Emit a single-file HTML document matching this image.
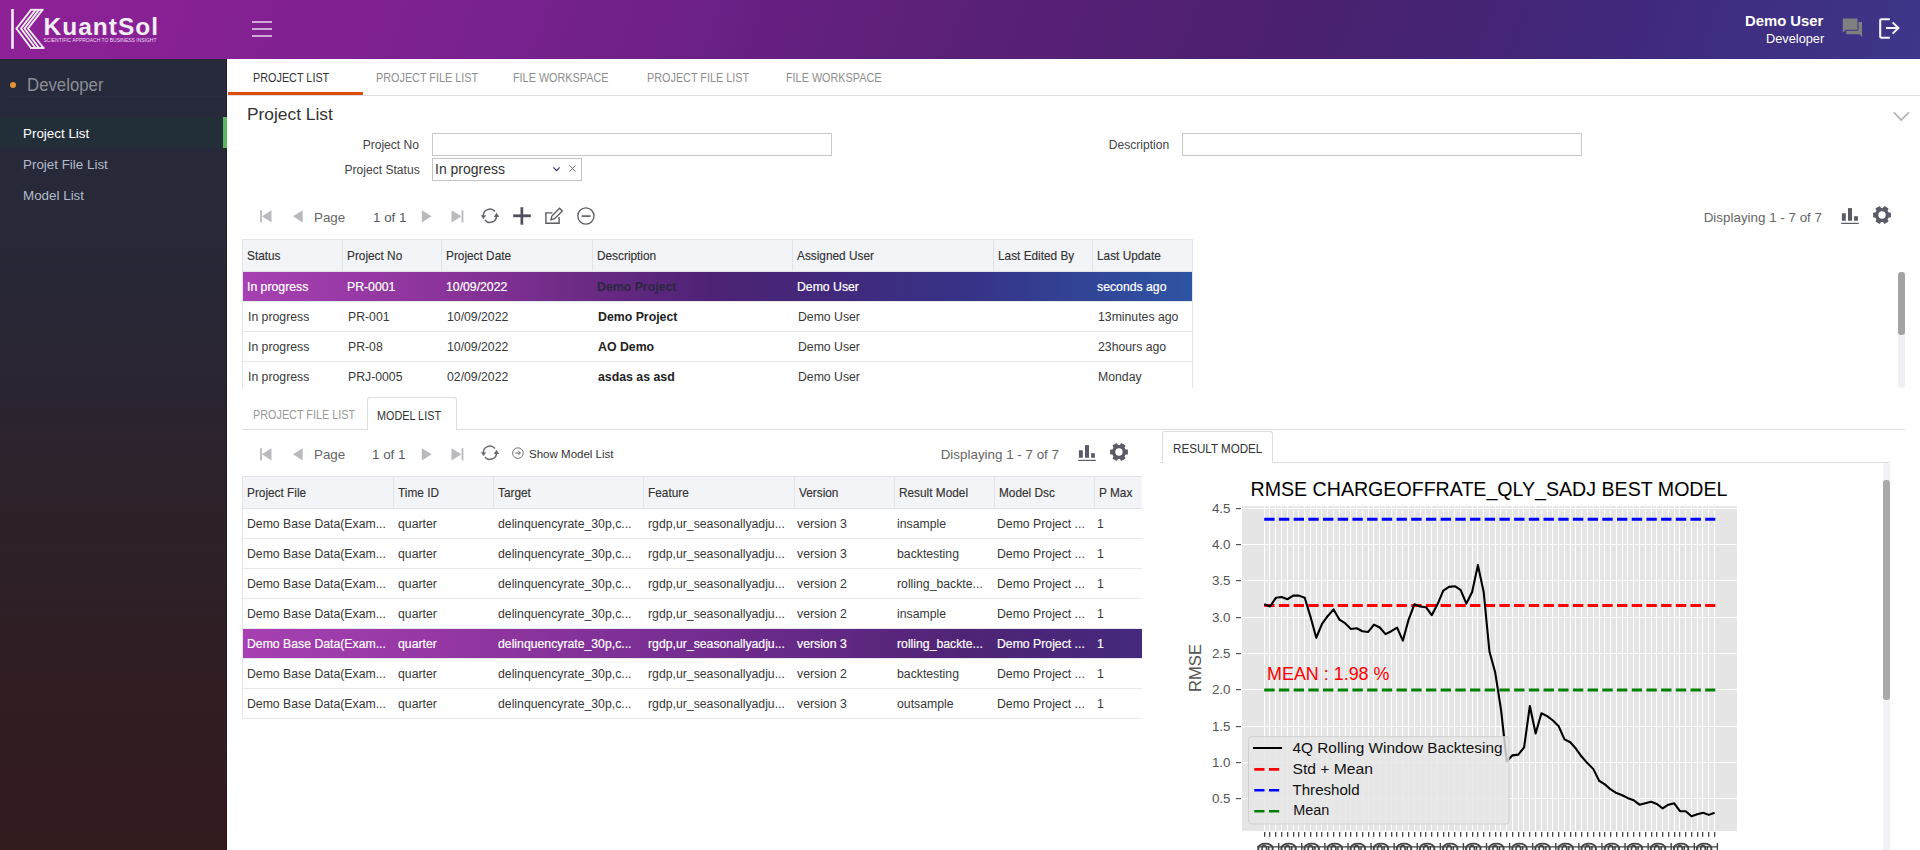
<!DOCTYPE html>
<html><head><meta charset="utf-8"><title>KuantSol</title>
<style>
html,body{margin:0;padding:0;width:1920px;height:850px;overflow:hidden;background:#fff;font-family:"Liberation Sans", sans-serif;}
.t{position:absolute;white-space:nowrap;font-family:"Liberation Sans", sans-serif;}
.b{position:absolute;display:block;}
</style></head><body>
<div class="b" style="left:0px;top:0px;width:1920px;height:59px;background:linear-gradient(110deg,#8f2197 0%,#7a2190 25%,#5a2078 50%,#4a2070 68%,#40297c 85%,#3d3789 100%);"></div><svg class="b" style="left:0px;top:0px;" width="170" height="59" viewBox="0 0 170 59">
<rect x="11.2" y="9" width="2.6" height="39.8" fill="#f2eef4"/>
<g fill="none" stroke="#f2eef4" stroke-width="1.9" stroke-linejoin="miter">
<polyline points="31,9.8 16.5,28.5 31,48"/>
<polyline points="35.5,9.8 21,28.5 35.5,48"/>
<polyline points="39,9.8 24.5,28.5 39,48"/>
<polyline points="42.5,9.8 28,28.5 43.5,48"/>
<line x1="30" y1="9.8" x2="43.5" y2="9.8"/>
<line x1="30" y1="48" x2="44.5" y2="48"/>
</g>
<text x="43.5" y="42.0" font-family="Liberation Sans" font-size="4.8" fill="#eadcef" textLength="113" lengthAdjust="spacingAndGlyphs">SCIENTIFIC APPROACH TO BUSINESS INSIGHT</text>
</svg><div class="t" style="top:14.66px;font-size:24.5px;line-height:24.5px;color:#f2eef4;font-weight:bold;letter-spacing:1.0px;left:43.5px;">KuantSol</div><div class="b" style="left:252px;top:21px;width:20px;height:2px;background:rgba(255,255,255,0.62);"></div><div class="b" style="left:252px;top:28px;width:20px;height:2px;background:rgba(255,255,255,0.62);"></div><div class="b" style="left:252px;top:35px;width:20px;height:2px;background:rgba(255,255,255,0.62);"></div><div class="t" style="top:13.79px;font-size:14.66px;line-height:14.66px;color:#ffffff;font-weight:bold;right:96.20000000000005px;text-align:right;transform:scaleX(1.013);transform-origin:right center;">Demo User</div><div class="t" style="top:32.20px;font-size:12.99px;line-height:12.99px;color:#ffffff;right:96.20000000000005px;text-align:right;transform:scaleX(0.983);transform-origin:right center;">Developer</div><svg class="b" style="left:1840px;top:16px;" width="26" height="24" viewBox="0 0 26 24">
<path d="M6.2 6 H22 V21 L19.5 18.2 H6.2 Z" fill="#808080"/>
<path d="M2.6 2 H17.4 Q18 2 18 2.6 V13.6 Q18 14.2 17.4 14.2 H6.2 L2.2 17.8 V2.6 Q2.2 2 2.6 2 Z" fill="#808080" stroke="#3f3586" stroke-width="1.1"/>
</svg><svg class="b" style="left:1876px;top:16px;" width="26" height="25" viewBox="0 0 26 25">
<path d="M13.8 3.2 H5.4 Q4.2 3.2 4.2 4.4 V20.6 Q4.2 21.8 5.4 21.8 H13.8" fill="none" stroke="#f4f4f8" stroke-width="2.1"/>
<path d="M10 12 H22.4 M16.6 6.4 L22.4 12 L16.6 17.6" fill="none" stroke="#f4f4f8" stroke-width="2"/>
</svg><div class="b" style="left:0px;top:59px;width:227px;height:791px;background:linear-gradient(180deg,#262a3b 0%,#292736 32%,#2d2129 58%,#301e23 80%,#331b1e 100%);"></div><div class="b" style="left:226px;top:59px;width:1px;height:791px;background:rgba(0,0,0,0.22);"></div><div class="b" style="left:12.9px;top:82px;width:6px;height:6px;border-radius:50%;background:#e49038;transform:translateX(-3px)"></div><div class="t" style="top:76.27px;font-size:18.58px;line-height:18.58px;color:#8c8d97;left:27.2px;transform:scaleX(0.904);transform-origin:left center;">Developer</div><div class="b" style="left:5px;top:96px;width:217px;height:1px;background:repeating-linear-gradient(90deg,rgba(255,255,255,0.06) 0 1px,transparent 1px 4px);"></div><div class="b" style="left:0px;top:117px;width:223px;height:31px;background:#222f38;"></div><div class="b" style="left:223px;top:117px;width:4px;height:31px;background:#5cb85c;"></div><div class="t" style="top:127.20px;font-size:12.99px;line-height:12.99px;color:#ffffff;left:22.7px;transform:scaleX(1.031);transform-origin:left center;">Project List</div><div class="t" style="top:158.00px;font-size:12.99px;line-height:12.99px;color:#b4bbc9;left:22.7px;transform:scaleX(1.031);transform-origin:left center;">Projet File List</div><div class="t" style="top:189.30px;font-size:12.99px;line-height:12.99px;color:#b4bbc9;left:22.7px;transform:scaleX(1.031);transform-origin:left center;">Model List</div><div class="b" style="left:227px;top:59px;width:1693px;height:791px;background:#ffffff;"></div><div class="t" style="top:72.23px;font-size:12.6px;line-height:12.6px;color:#333333;left:252.79999999999998px;transform:scaleX(0.86);transform-origin:left center;">PROJECT LIST</div><div class="t" style="top:72.23px;font-size:12.6px;line-height:12.6px;color:#8e8e8e;left:375.59999999999997px;transform:scaleX(0.86);transform-origin:left center;">PROJECT FILE LIST</div><div class="t" style="top:72.23px;font-size:12.6px;line-height:12.6px;color:#8e8e8e;left:513.2px;transform:scaleX(0.86);transform-origin:left center;">FILE WORKSPACE</div><div class="t" style="top:72.23px;font-size:12.6px;line-height:12.6px;color:#8e8e8e;left:647.2px;transform:scaleX(0.86);transform-origin:left center;">PROJECT FILE LIST</div><div class="t" style="top:72.23px;font-size:12.6px;line-height:12.6px;color:#8e8e8e;left:785.6px;transform:scaleX(0.86);transform-origin:left center;">FILE WORKSPACE</div><div class="b" style="left:227px;top:95px;width:1693px;height:1px;background:#dddddd;"></div><div class="b" style="left:228px;top:92px;width:135px;height:3px;background:#e04b0c;"></div><div class="t" style="top:106.81px;font-size:16.76px;line-height:16.76px;color:#333333;left:246.7px;transform:scaleX(1.035);transform-origin:left center;">Project List</div><svg class="b" style="left:1890px;top:108px;" width="24" height="16" viewBox="0 0 24 16"><polyline points="3.8,4.4 11.2,12 18.8,4.4" fill="none" stroke="#b0b0b0" stroke-width="1.6"/></svg><div class="t" style="top:139.29px;font-size:12.65px;line-height:12.65px;color:#444444;right:1500.5px;text-align:right;transform:scaleX(0.955);transform-origin:right center;">Project No</div><div class="b" style="left:432px;top:133px;width:400px;height:23px;background:#fff;border:1px solid #c8c8c8;box-sizing:border-box"></div><div class="t" style="top:139.29px;font-size:12.65px;line-height:12.65px;color:#444444;right:750.5px;text-align:right;transform:scaleX(0.955);transform-origin:right center;">Description</div><div class="b" style="left:1182px;top:133px;width:400px;height:23px;background:#fff;border:1px solid #c8c8c8;box-sizing:border-box"></div><div class="t" style="top:164.29px;font-size:12.65px;line-height:12.65px;color:#444444;right:1500.5px;text-align:right;transform:scaleX(0.955);transform-origin:right center;">Project Status</div><div class="b" style="left:432px;top:158px;width:150px;height:23px;background:#fff;border:1px solid #c4c4c4;box-sizing:border-box"></div><div class="t" style="top:163.37px;font-size:13.97px;line-height:13.97px;color:#333333;left:435px;">In progress</div><svg class="b" style="left:550px;top:162px;" width="34" height="14" viewBox="0 0 34 14"><polyline points="3.4,5.3 6.5,8.6 9.6,5.3" fill="none" stroke="#2d2a6e" stroke-width="1.1"/>
<path d="M19.4 3.3 L25.6 9.6 M25.6 3.3 L19.4 9.6" stroke="#707070" stroke-width="1"/></svg><svg class="b" style="left:255px;top:206.3px;" width="215" height="20" viewBox="0 0 215 20">
<rect x="5.1" y="4.2" width="1.8" height="12.2" fill="#b9b9be"/>
<polygon points="7,10.3 16.5,4.2 16.5,16.4" fill="#b9b9be"/>
<polygon points="38,10.3 47.7,4.2 47.7,16.4" fill="#b9b9be"/>
<polygon points="176.6,10.3 166.8,4.2 166.8,16.4" fill="#b9b9be"/>
<polygon points="206.5,10.3 196.5,4.2 196.5,16.4" fill="#b9b9be"/>
<rect x="206.6" y="4.2" width="1.8" height="12.2" fill="#b9b9be"/>
</svg><div class="t" style="top:211.09px;font-size:13.13px;line-height:13.13px;color:#666666;left:314px;transform:scaleX(1.02);transform-origin:left center;">Page</div><div class="t" style="top:211.09px;font-size:13.13px;line-height:13.13px;color:#555a66;left:372.6px;transform:scaleX(1.02);transform-origin:left center;">1 of 1</div><svg class="b" style="left:480px;top:206px;" width="20" height="20" viewBox="0 0 20 20"><path d="M14.96 5.56 A6.6 6.6 0 0 0 3.3 9.8" fill="none" stroke="#606068" stroke-width="1.5"/>
<polygon points="0.9,9.2 6.1,9.2 3.5,13.2" fill="#606068"/>
<path d="M4.84 14.04 A6.6 6.6 0 0 0 16.5 10.2" fill="none" stroke="#606068" stroke-width="1.5"/>
<polygon points="13.8,10.9 19.2,10.9 16.5,6.8" fill="#606068"/></svg><svg class="b" style="left:510px;top:205px;" width="24" height="22" viewBox="0 0 24 22"><rect x="10.5" y="2.2" width="2.7" height="17.5" fill="#4f505c"/><rect x="3.2" y="9.4" width="17.6" height="2.8" fill="#4f505c"/></svg><svg class="b" style="left:543px;top:206px;" width="22" height="20" viewBox="0 0 22 20"><path d="M9.5 6.9 H2.9 V17.2 H16.1 V10.9" fill="none" stroke="#5a5a62" stroke-width="1.4"/>
<path d="M16.6 2.3 L19.3 5.0 L11.6 12.7 L7.9 13.8 L8.9 10.0 Z" fill="none" stroke="#5a5a62" stroke-width="1.35" stroke-linejoin="miter"/></svg><svg class="b" style="left:575px;top:205px;" width="22" height="22" viewBox="0 0 22 22"><circle cx="10.9" cy="11" r="8.1" fill="none" stroke="#5a5a62" stroke-width="1.35"/><rect x="6.6" y="10.3" width="8.9" height="1.6" fill="#5a5a62"/></svg><div class="t" style="top:211.09px;font-size:13.13px;line-height:13.13px;color:#666666;right:98px;text-align:right;transform:scaleX(1.02);transform-origin:right center;">Displaying 1 - 7 of 7</div><svg class="b" style="left:1840px;top:208px;" width="20" height="17" viewBox="0 0 20 17"><rect x="1.9" y="5.25" width="3.9" height="7.5" fill="#5a5b66"/><rect x="8" y="0.1" width="4" height="12.65" fill="#5a5b66"/>
<rect x="14.1" y="8.2" width="3.8" height="4.55" fill="#5a5b66"/><rect x="1.2" y="14.8" width="17.6" height="1.2" fill="#5a5b66"/></svg><svg class="b" style="left:1872px;top:205.4px;" width="20" height="20" viewBox="0 0 20 20"><g transform="translate(10,10)"><circle r="7" fill="#5a5b66"/><rect x="-2.6" y="-8.9" width="5.2" height="4.5" rx="0.6" fill="#5a5b66" transform="rotate(30)"/><rect x="-2.6" y="-8.9" width="5.2" height="4.5" rx="0.6" fill="#5a5b66" transform="rotate(90)"/><rect x="-2.6" y="-8.9" width="5.2" height="4.5" rx="0.6" fill="#5a5b66" transform="rotate(150)"/><rect x="-2.6" y="-8.9" width="5.2" height="4.5" rx="0.6" fill="#5a5b66" transform="rotate(210)"/><rect x="-2.6" y="-8.9" width="5.2" height="4.5" rx="0.6" fill="#5a5b66" transform="rotate(270)"/><rect x="-2.6" y="-8.9" width="5.2" height="4.5" rx="0.6" fill="#5a5b66" transform="rotate(330)"/><circle r="3.7" fill="#fff"/></g></svg><div class="b" style="left:242px;top:239px;width:951px;height:1px;background:#e4e4e8;"></div><div class="b" style="left:242px;top:239px;width:1px;height:149px;background:#e4e4e8;"></div><div class="b" style="left:1192px;top:239px;width:1px;height:149px;background:#e4e4e8;"></div><div class="b" style="left:243px;top:240px;width:949px;height:31px;background:#f3f4f7;"></div><div class="b" style="left:242px;top:271px;width:951px;height:1px;background:#e1e2e6;"></div><div class="b" style="left:342px;top:240px;width:1px;height:31px;background:#e3e4e8;"></div><div class="b" style="left:441px;top:240px;width:1px;height:31px;background:#e3e4e8;"></div><div class="b" style="left:592px;top:240px;width:1px;height:31px;background:#e3e4e8;"></div><div class="b" style="left:792px;top:240px;width:1px;height:31px;background:#e3e4e8;"></div><div class="b" style="left:993px;top:240px;width:1px;height:31px;background:#e3e4e8;"></div><div class="b" style="left:1092px;top:240px;width:1px;height:31px;background:#e3e4e8;"></div><div class="t" style="top:249.90px;font-size:12.29px;line-height:12.29px;color:#333333;left:246.5px;transform:scaleX(0.963);transform-origin:left center;-webkit-text-stroke:0.15px #333;">Status</div><div class="t" style="top:249.90px;font-size:12.29px;line-height:12.29px;color:#333333;left:346.5px;transform:scaleX(0.963);transform-origin:left center;-webkit-text-stroke:0.15px #333;">Project No</div><div class="t" style="top:249.90px;font-size:12.29px;line-height:12.29px;color:#333333;left:445.5px;transform:scaleX(0.963);transform-origin:left center;-webkit-text-stroke:0.15px #333;">Project Date</div><div class="t" style="top:249.90px;font-size:12.29px;line-height:12.29px;color:#333333;left:596.5px;transform:scaleX(0.963);transform-origin:left center;-webkit-text-stroke:0.15px #333;">Description</div><div class="t" style="top:249.90px;font-size:12.29px;line-height:12.29px;color:#333333;left:796.5px;transform:scaleX(0.963);transform-origin:left center;-webkit-text-stroke:0.15px #333;">Assigned User</div><div class="t" style="top:249.90px;font-size:12.29px;line-height:12.29px;color:#333333;left:997.5px;transform:scaleX(0.963);transform-origin:left center;-webkit-text-stroke:0.15px #333;">Last Edited By</div><div class="t" style="top:249.90px;font-size:12.29px;line-height:12.29px;color:#333333;left:1096.5px;transform:scaleX(0.963);transform-origin:left center;-webkit-text-stroke:0.15px #333;">Last Update</div><div class="b" style="left:243px;top:272px;width:949px;height:29px;background:linear-gradient(90deg,#a740b2 0%,#8a3399 22%,#4c2274 50%,#373185 75%,#2d54a4 100%);"></div><div class="b" style="left:243px;top:301px;width:949px;height:1px;background:#e6e7ec;"></div><div class="b" style="left:243px;top:331px;width:949px;height:1px;background:#e6e7ec;"></div><div class="b" style="left:243px;top:361px;width:949px;height:1px;background:#e6e7ec;"></div><div class="t" style="top:280.62px;font-size:12.5px;line-height:12.5px;color:#ffffff;left:247.2px;transform:scaleX(0.98);transform-origin:left center;-webkit-text-stroke:0.2px #fff;">In progress</div><div class="t" style="top:280.62px;font-size:12.5px;line-height:12.5px;color:#ffffff;left:347.2px;transform:scaleX(0.98);transform-origin:left center;-webkit-text-stroke:0.2px #fff;">PR-0001</div><div class="t" style="top:280.62px;font-size:12.5px;line-height:12.5px;color:#ffffff;left:446.2px;transform:scaleX(0.98);transform-origin:left center;-webkit-text-stroke:0.2px #fff;">10/09/2022</div><div class="t" style="top:280.62px;font-size:12.5px;line-height:12.5px;color:#2b2840;font-weight:bold;left:597.2px;transform:scaleX(0.985);transform-origin:left center;">Demo Project</div><div class="t" style="top:280.62px;font-size:12.5px;line-height:12.5px;color:#ffffff;left:797.2px;transform:scaleX(0.98);transform-origin:left center;-webkit-text-stroke:0.2px #fff;">Demo User</div><div class="t" style="top:280.62px;font-size:12.5px;line-height:12.5px;color:#ffffff;left:1097.2px;transform:scaleX(0.98);transform-origin:left center;-webkit-text-stroke:0.2px #fff;">seconds ago</div><div class="t" style="top:310.62px;font-size:12.5px;line-height:12.5px;color:#383838;left:247.8px;transform:scaleX(0.98);transform-origin:left center;">In progress</div><div class="t" style="top:310.62px;font-size:12.5px;line-height:12.5px;color:#383838;left:347.8px;transform:scaleX(0.98);transform-origin:left center;">PR-001</div><div class="t" style="top:310.62px;font-size:12.5px;line-height:12.5px;color:#383838;left:446.8px;transform:scaleX(0.98);transform-origin:left center;">10/09/2022</div><div class="t" style="top:310.62px;font-size:12.5px;line-height:12.5px;color:#222222;font-weight:bold;left:597.8px;transform:scaleX(0.985);transform-origin:left center;">Demo Project</div><div class="t" style="top:310.62px;font-size:12.5px;line-height:12.5px;color:#383838;left:797.8px;transform:scaleX(0.98);transform-origin:left center;">Demo User</div><div class="t" style="top:310.62px;font-size:12.5px;line-height:12.5px;color:#383838;left:1097.8px;transform:scaleX(0.98);transform-origin:left center;">13minutes ago</div><div class="t" style="top:340.62px;font-size:12.5px;line-height:12.5px;color:#383838;left:247.8px;transform:scaleX(0.98);transform-origin:left center;">In progress</div><div class="t" style="top:340.62px;font-size:12.5px;line-height:12.5px;color:#383838;left:347.8px;transform:scaleX(0.98);transform-origin:left center;">PR-08</div><div class="t" style="top:340.62px;font-size:12.5px;line-height:12.5px;color:#383838;left:446.8px;transform:scaleX(0.98);transform-origin:left center;">10/09/2022</div><div class="t" style="top:340.62px;font-size:12.5px;line-height:12.5px;color:#222222;font-weight:bold;left:597.8px;transform:scaleX(0.985);transform-origin:left center;">AO Demo</div><div class="t" style="top:340.62px;font-size:12.5px;line-height:12.5px;color:#383838;left:797.8px;transform:scaleX(0.98);transform-origin:left center;">Demo User</div><div class="t" style="top:340.62px;font-size:12.5px;line-height:12.5px;color:#383838;left:1097.8px;transform:scaleX(0.98);transform-origin:left center;">23hours ago</div><div class="t" style="top:370.62px;font-size:12.5px;line-height:12.5px;color:#383838;left:247.8px;transform:scaleX(0.98);transform-origin:left center;">In progress</div><div class="t" style="top:370.62px;font-size:12.5px;line-height:12.5px;color:#383838;left:347.8px;transform:scaleX(0.98);transform-origin:left center;">PRJ-0005</div><div class="t" style="top:370.62px;font-size:12.5px;line-height:12.5px;color:#383838;left:446.8px;transform:scaleX(0.98);transform-origin:left center;">02/09/2022</div><div class="t" style="top:370.62px;font-size:12.5px;line-height:12.5px;color:#222222;font-weight:bold;left:597.8px;transform:scaleX(0.985);transform-origin:left center;">asdas as asd</div><div class="t" style="top:370.62px;font-size:12.5px;line-height:12.5px;color:#383838;left:797.8px;transform:scaleX(0.98);transform-origin:left center;">Demo User</div><div class="t" style="top:370.62px;font-size:12.5px;line-height:12.5px;color:#383838;left:1097.8px;transform:scaleX(0.98);transform-origin:left center;">Monday</div><div class="b" style="left:1898px;top:272px;width:7px;height:116px;background:#f0f0f4;border-radius:3px"></div><div class="b" style="left:1898px;top:272px;width:7px;height:63px;background:#a2a3a2;border-radius:3px"></div><div class="b" style="left:242px;top:429px;width:1663px;height:1px;background:#dddddd;"></div><div class="t" style="top:408.53px;font-size:12.6px;line-height:12.6px;color:#999999;left:252.5px;transform:scaleX(0.86);transform-origin:left center;">PROJECT FILE LIST</div><div class="b" style="left:366.5px;top:397px;width:90px;height:33px;background:#fff;border:1px solid #dddddd;border-bottom:none;border-radius:3px 3px 0 0;box-sizing:border-box"></div><div class="t" style="top:409.53px;font-size:12.6px;line-height:12.6px;color:#333333;left:376.9px;transform:scaleX(0.86);transform-origin:left center;">MODEL LIST</div><svg class="b" style="left:255px;top:444.2px;" width="215" height="20" viewBox="0 0 215 20">
<rect x="5.1" y="4.2" width="1.8" height="12.2" fill="#b9b9be"/>
<polygon points="7,10.3 16.5,4.2 16.5,16.4" fill="#b9b9be"/>
<polygon points="38,10.3 47.7,4.2 47.7,16.4" fill="#b9b9be"/>
<polygon points="176.6,10.3 166.8,4.2 166.8,16.4" fill="#b9b9be"/>
<polygon points="206.5,10.3 196.5,4.2 196.5,16.4" fill="#b9b9be"/>
<rect x="206.6" y="4.2" width="1.8" height="12.2" fill="#b9b9be"/>
</svg><div class="t" style="top:448.09px;font-size:13.13px;line-height:13.13px;color:#666666;left:314px;transform:scaleX(1.02);transform-origin:left center;">Page</div><div class="t" style="top:448.09px;font-size:13.13px;line-height:13.13px;color:#555a66;left:372px;transform:scaleX(1.02);transform-origin:left center;">1 of 1</div><svg class="b" style="left:480px;top:443px;" width="20" height="20" viewBox="0 0 20 20"><path d="M14.96 5.56 A6.6 6.6 0 0 0 3.3 9.8" fill="none" stroke="#6a6a70" stroke-width="1.5"/>
<polygon points="0.9,9.2 6.1,9.2 3.5,13.2" fill="#6a6a70"/>
<path d="M4.84 14.04 A6.6 6.6 0 0 0 16.5 10.2" fill="none" stroke="#6a6a70" stroke-width="1.5"/>
<polygon points="13.8,10.9 19.2,10.9 16.5,6.8" fill="#6a6a70"/></svg><svg class="b" style="left:510px;top:446px;" width="16" height="15" viewBox="0 0 16 15"><circle cx="7.9" cy="7.1" r="5.3" fill="none" stroke="#666" stroke-width="0.9"/><path d="M5.2 7.1 H10.3 M8.4 5.2 L10.4 7.1 L8.4 9" fill="none" stroke="#555" stroke-width="0.9"/></svg><div class="t" style="top:448.60px;font-size:10.75px;line-height:10.75px;color:#333333;left:528.5px;transform:scaleX(1.072);transform-origin:left center;">Show Model List</div><div class="t" style="top:447.69px;font-size:13.13px;line-height:13.13px;color:#666666;right:860.8px;text-align:right;transform:scaleX(1.02);transform-origin:right center;">Displaying 1 - 7 of 7</div><svg class="b" style="left:1077px;top:445px;" width="20" height="17" viewBox="0 0 20 17"><rect x="1.9" y="5.25" width="3.9" height="7.5" fill="#5a5b66"/><rect x="8" y="0.1" width="4" height="12.65" fill="#5a5b66"/>
<rect x="14.1" y="8.2" width="3.8" height="4.55" fill="#5a5b66"/><rect x="1.2" y="14.8" width="17.6" height="1.2" fill="#5a5b66"/></svg><svg class="b" style="left:1109px;top:442.3px;" width="20" height="20" viewBox="0 0 20 20"><g transform="translate(10,10)"><circle r="7" fill="#5a5b66"/><rect x="-2.6" y="-8.9" width="5.2" height="4.5" rx="0.6" fill="#5a5b66" transform="rotate(30)"/><rect x="-2.6" y="-8.9" width="5.2" height="4.5" rx="0.6" fill="#5a5b66" transform="rotate(90)"/><rect x="-2.6" y="-8.9" width="5.2" height="4.5" rx="0.6" fill="#5a5b66" transform="rotate(150)"/><rect x="-2.6" y="-8.9" width="5.2" height="4.5" rx="0.6" fill="#5a5b66" transform="rotate(210)"/><rect x="-2.6" y="-8.9" width="5.2" height="4.5" rx="0.6" fill="#5a5b66" transform="rotate(270)"/><rect x="-2.6" y="-8.9" width="5.2" height="4.5" rx="0.6" fill="#5a5b66" transform="rotate(330)"/><circle r="3.7" fill="#fff"/></g></svg><div class="b" style="left:242px;top:476px;width:900px;height:1px;background:#e4e4e8;"></div><div class="b" style="left:242px;top:476px;width:1px;height:243px;background:#e4e4e8;"></div><div class="b" style="left:243px;top:477px;width:899px;height:31px;background:#f3f4f7;"></div><div class="b" style="left:242px;top:508px;width:900px;height:1px;background:#e1e2e6;"></div><div class="b" style="left:393px;top:477px;width:1px;height:31px;background:#e3e4e8;"></div><div class="b" style="left:493px;top:477px;width:1px;height:31px;background:#e3e4e8;"></div><div class="b" style="left:643px;top:477px;width:1px;height:31px;background:#e3e4e8;"></div><div class="b" style="left:794px;top:477px;width:1px;height:31px;background:#e3e4e8;"></div><div class="b" style="left:894px;top:477px;width:1px;height:31px;background:#e3e4e8;"></div><div class="b" style="left:994px;top:477px;width:1px;height:31px;background:#e3e4e8;"></div><div class="b" style="left:1094px;top:477px;width:1px;height:31px;background:#e3e4e8;"></div><div class="t" style="top:487.20px;font-size:12.29px;line-height:12.29px;color:#333333;left:246.5px;transform:scaleX(0.963);transform-origin:left center;-webkit-text-stroke:0.15px #333;">Project File</div><div class="t" style="top:487.20px;font-size:12.29px;line-height:12.29px;color:#333333;left:397.5px;transform:scaleX(0.963);transform-origin:left center;-webkit-text-stroke:0.15px #333;">Time ID</div><div class="t" style="top:487.20px;font-size:12.29px;line-height:12.29px;color:#333333;left:497.5px;transform:scaleX(0.963);transform-origin:left center;-webkit-text-stroke:0.15px #333;">Target</div><div class="t" style="top:487.20px;font-size:12.29px;line-height:12.29px;color:#333333;left:647.5px;transform:scaleX(0.963);transform-origin:left center;-webkit-text-stroke:0.15px #333;">Feature</div><div class="t" style="top:487.20px;font-size:12.29px;line-height:12.29px;color:#333333;left:798.5px;transform:scaleX(0.963);transform-origin:left center;-webkit-text-stroke:0.15px #333;">Version</div><div class="t" style="top:487.20px;font-size:12.29px;line-height:12.29px;color:#333333;left:898.5px;transform:scaleX(0.963);transform-origin:left center;-webkit-text-stroke:0.15px #333;">Result Model</div><div class="t" style="top:487.20px;font-size:12.29px;line-height:12.29px;color:#333333;left:998.5px;transform:scaleX(0.963);transform-origin:left center;-webkit-text-stroke:0.15px #333;">Model Dsc</div><div class="t" style="top:487.20px;font-size:12.29px;line-height:12.29px;color:#333333;left:1098.5px;transform:scaleX(0.963);transform-origin:left center;-webkit-text-stroke:0.15px #333;">P Max</div><div class="b" style="left:243px;top:538px;width:899px;height:1px;background:#e6e7ec;"></div><div class="b" style="left:243px;top:568px;width:899px;height:1px;background:#e6e7ec;"></div><div class="b" style="left:243px;top:598px;width:899px;height:1px;background:#e6e7ec;"></div><div class="b" style="left:243px;top:628px;width:899px;height:1px;background:#e6e7ec;"></div><div class="b" style="left:243px;top:658px;width:899px;height:1px;background:#e6e7ec;"></div><div class="b" style="left:243px;top:688px;width:899px;height:1px;background:#e6e7ec;"></div><div class="b" style="left:243px;top:718px;width:899px;height:1px;background:#e6e7ec;"></div><div class="b" style="left:243px;top:629px;width:899px;height:29px;background:linear-gradient(90deg,#a740b2 0%,#8d349e 30%,#6a2a8a 58%,#4f2476 80%,#44297c 100%);"></div><div class="t" style="top:518.02px;font-size:12.5px;line-height:12.5px;color:#363636;left:247.2px;transform:scaleX(0.98);transform-origin:left center;">Demo Base Data(Exam...</div><div class="t" style="top:518.02px;font-size:12.5px;line-height:12.5px;color:#363636;left:398.2px;transform:scaleX(0.98);transform-origin:left center;">quarter</div><div class="t" style="top:518.02px;font-size:12.5px;line-height:12.5px;color:#363636;left:498.2px;transform:scaleX(0.98);transform-origin:left center;">delinquencyrate_30p,c...</div><div class="t" style="top:518.02px;font-size:12.5px;line-height:12.5px;color:#363636;left:648.2px;transform:scaleX(0.98);transform-origin:left center;">rgdp,ur_seasonallyadju...</div><div class="t" style="top:518.02px;font-size:12.5px;line-height:12.5px;color:#363636;left:797.2px;transform:scaleX(0.98);transform-origin:left center;">version 3</div><div class="t" style="top:518.02px;font-size:12.5px;line-height:12.5px;color:#363636;left:897.2px;transform:scaleX(0.98);transform-origin:left center;">insample</div><div class="t" style="top:518.02px;font-size:12.5px;line-height:12.5px;color:#363636;left:997.2px;transform:scaleX(0.98);transform-origin:left center;">Demo Project ...</div><div class="t" style="top:518.02px;font-size:12.5px;line-height:12.5px;color:#363636;left:1097.2px;transform:scaleX(0.98);transform-origin:left center;">1</div><div class="t" style="top:548.02px;font-size:12.5px;line-height:12.5px;color:#363636;left:247.2px;transform:scaleX(0.98);transform-origin:left center;">Demo Base Data(Exam...</div><div class="t" style="top:548.02px;font-size:12.5px;line-height:12.5px;color:#363636;left:398.2px;transform:scaleX(0.98);transform-origin:left center;">quarter</div><div class="t" style="top:548.02px;font-size:12.5px;line-height:12.5px;color:#363636;left:498.2px;transform:scaleX(0.98);transform-origin:left center;">delinquencyrate_30p,c...</div><div class="t" style="top:548.02px;font-size:12.5px;line-height:12.5px;color:#363636;left:648.2px;transform:scaleX(0.98);transform-origin:left center;">rgdp,ur_seasonallyadju...</div><div class="t" style="top:548.02px;font-size:12.5px;line-height:12.5px;color:#363636;left:797.2px;transform:scaleX(0.98);transform-origin:left center;">version 3</div><div class="t" style="top:548.02px;font-size:12.5px;line-height:12.5px;color:#363636;left:897.2px;transform:scaleX(0.98);transform-origin:left center;">backtesting</div><div class="t" style="top:548.02px;font-size:12.5px;line-height:12.5px;color:#363636;left:997.2px;transform:scaleX(0.98);transform-origin:left center;">Demo Project ...</div><div class="t" style="top:548.02px;font-size:12.5px;line-height:12.5px;color:#363636;left:1097.2px;transform:scaleX(0.98);transform-origin:left center;">1</div><div class="t" style="top:578.02px;font-size:12.5px;line-height:12.5px;color:#363636;left:247.2px;transform:scaleX(0.98);transform-origin:left center;">Demo Base Data(Exam...</div><div class="t" style="top:578.02px;font-size:12.5px;line-height:12.5px;color:#363636;left:398.2px;transform:scaleX(0.98);transform-origin:left center;">quarter</div><div class="t" style="top:578.02px;font-size:12.5px;line-height:12.5px;color:#363636;left:498.2px;transform:scaleX(0.98);transform-origin:left center;">delinquencyrate_30p,c...</div><div class="t" style="top:578.02px;font-size:12.5px;line-height:12.5px;color:#363636;left:648.2px;transform:scaleX(0.98);transform-origin:left center;">rgdp,ur_seasonallyadju...</div><div class="t" style="top:578.02px;font-size:12.5px;line-height:12.5px;color:#363636;left:797.2px;transform:scaleX(0.98);transform-origin:left center;">version 2</div><div class="t" style="top:578.02px;font-size:12.5px;line-height:12.5px;color:#363636;left:897.2px;transform:scaleX(0.98);transform-origin:left center;">rolling_backte...</div><div class="t" style="top:578.02px;font-size:12.5px;line-height:12.5px;color:#363636;left:997.2px;transform:scaleX(0.98);transform-origin:left center;">Demo Project ...</div><div class="t" style="top:578.02px;font-size:12.5px;line-height:12.5px;color:#363636;left:1097.2px;transform:scaleX(0.98);transform-origin:left center;">1</div><div class="t" style="top:608.02px;font-size:12.5px;line-height:12.5px;color:#363636;left:247.2px;transform:scaleX(0.98);transform-origin:left center;">Demo Base Data(Exam...</div><div class="t" style="top:608.02px;font-size:12.5px;line-height:12.5px;color:#363636;left:398.2px;transform:scaleX(0.98);transform-origin:left center;">quarter</div><div class="t" style="top:608.02px;font-size:12.5px;line-height:12.5px;color:#363636;left:498.2px;transform:scaleX(0.98);transform-origin:left center;">delinquencyrate_30p,c...</div><div class="t" style="top:608.02px;font-size:12.5px;line-height:12.5px;color:#363636;left:648.2px;transform:scaleX(0.98);transform-origin:left center;">rgdp,ur_seasonallyadju...</div><div class="t" style="top:608.02px;font-size:12.5px;line-height:12.5px;color:#363636;left:797.2px;transform:scaleX(0.98);transform-origin:left center;">version 2</div><div class="t" style="top:608.02px;font-size:12.5px;line-height:12.5px;color:#363636;left:897.2px;transform:scaleX(0.98);transform-origin:left center;">insample</div><div class="t" style="top:608.02px;font-size:12.5px;line-height:12.5px;color:#363636;left:997.2px;transform:scaleX(0.98);transform-origin:left center;">Demo Project ...</div><div class="t" style="top:608.02px;font-size:12.5px;line-height:12.5px;color:#363636;left:1097.2px;transform:scaleX(0.98);transform-origin:left center;">1</div><div class="t" style="top:638.02px;font-size:12.5px;line-height:12.5px;color:#ffffff;left:247.2px;transform:scaleX(0.98);transform-origin:left center;-webkit-text-stroke:0.2px #fff;">Demo Base Data(Exam...</div><div class="t" style="top:638.02px;font-size:12.5px;line-height:12.5px;color:#ffffff;left:398.2px;transform:scaleX(0.98);transform-origin:left center;-webkit-text-stroke:0.2px #fff;">quarter</div><div class="t" style="top:638.02px;font-size:12.5px;line-height:12.5px;color:#ffffff;left:498.2px;transform:scaleX(0.98);transform-origin:left center;-webkit-text-stroke:0.2px #fff;">delinquencyrate_30p,c...</div><div class="t" style="top:638.02px;font-size:12.5px;line-height:12.5px;color:#ffffff;left:648.2px;transform:scaleX(0.98);transform-origin:left center;-webkit-text-stroke:0.2px #fff;">rgdp,ur_seasonallyadju...</div><div class="t" style="top:638.02px;font-size:12.5px;line-height:12.5px;color:#ffffff;left:797.2px;transform:scaleX(0.98);transform-origin:left center;-webkit-text-stroke:0.2px #fff;">version 3</div><div class="t" style="top:638.02px;font-size:12.5px;line-height:12.5px;color:#ffffff;left:897.2px;transform:scaleX(0.98);transform-origin:left center;-webkit-text-stroke:0.2px #fff;">rolling_backte...</div><div class="t" style="top:638.02px;font-size:12.5px;line-height:12.5px;color:#ffffff;left:997.2px;transform:scaleX(0.98);transform-origin:left center;-webkit-text-stroke:0.2px #fff;">Demo Project ...</div><div class="t" style="top:638.02px;font-size:12.5px;line-height:12.5px;color:#ffffff;left:1097.2px;transform:scaleX(0.98);transform-origin:left center;-webkit-text-stroke:0.2px #fff;">1</div><div class="t" style="top:668.02px;font-size:12.5px;line-height:12.5px;color:#363636;left:247.2px;transform:scaleX(0.98);transform-origin:left center;">Demo Base Data(Exam...</div><div class="t" style="top:668.02px;font-size:12.5px;line-height:12.5px;color:#363636;left:398.2px;transform:scaleX(0.98);transform-origin:left center;">quarter</div><div class="t" style="top:668.02px;font-size:12.5px;line-height:12.5px;color:#363636;left:498.2px;transform:scaleX(0.98);transform-origin:left center;">delinquencyrate_30p,c...</div><div class="t" style="top:668.02px;font-size:12.5px;line-height:12.5px;color:#363636;left:648.2px;transform:scaleX(0.98);transform-origin:left center;">rgdp,ur_seasonallyadju...</div><div class="t" style="top:668.02px;font-size:12.5px;line-height:12.5px;color:#363636;left:797.2px;transform:scaleX(0.98);transform-origin:left center;">version 2</div><div class="t" style="top:668.02px;font-size:12.5px;line-height:12.5px;color:#363636;left:897.2px;transform:scaleX(0.98);transform-origin:left center;">backtesting</div><div class="t" style="top:668.02px;font-size:12.5px;line-height:12.5px;color:#363636;left:997.2px;transform:scaleX(0.98);transform-origin:left center;">Demo Project ...</div><div class="t" style="top:668.02px;font-size:12.5px;line-height:12.5px;color:#363636;left:1097.2px;transform:scaleX(0.98);transform-origin:left center;">1</div><div class="t" style="top:698.02px;font-size:12.5px;line-height:12.5px;color:#363636;left:247.2px;transform:scaleX(0.98);transform-origin:left center;">Demo Base Data(Exam...</div><div class="t" style="top:698.02px;font-size:12.5px;line-height:12.5px;color:#363636;left:398.2px;transform:scaleX(0.98);transform-origin:left center;">quarter</div><div class="t" style="top:698.02px;font-size:12.5px;line-height:12.5px;color:#363636;left:498.2px;transform:scaleX(0.98);transform-origin:left center;">delinquencyrate_30p,c...</div><div class="t" style="top:698.02px;font-size:12.5px;line-height:12.5px;color:#363636;left:648.2px;transform:scaleX(0.98);transform-origin:left center;">rgdp,ur_seasonallyadju...</div><div class="t" style="top:698.02px;font-size:12.5px;line-height:12.5px;color:#363636;left:797.2px;transform:scaleX(0.98);transform-origin:left center;">version 3</div><div class="t" style="top:698.02px;font-size:12.5px;line-height:12.5px;color:#363636;left:897.2px;transform:scaleX(0.98);transform-origin:left center;">outsample</div><div class="t" style="top:698.02px;font-size:12.5px;line-height:12.5px;color:#363636;left:997.2px;transform:scaleX(0.98);transform-origin:left center;">Demo Project ...</div><div class="t" style="top:698.02px;font-size:12.5px;line-height:12.5px;color:#363636;left:1097.2px;transform:scaleX(0.98);transform-origin:left center;">1</div><div class="b" style="left:1162px;top:430.5px;width:111px;height:32.5px;background:#fff;border:1px solid #dddddd;border-bottom:none;border-radius:3px 3px 0 0;box-sizing:border-box"></div><div class="b" style="left:1272px;top:462px;width:618px;height:1px;background:#dddddd;"></div><div class="b" style="left:1160px;top:462px;width:3px;height:1px;background:#dddddd;"></div><div class="t" style="top:442.60px;font-size:12.29px;line-height:12.29px;color:#333333;left:1172.7px;transform:scaleX(0.946);transform-origin:left center;">RESULT MODEL</div><div class="b" style="left:1883px;top:463px;width:7px;height:397px;background:#f2f2f6;border-radius:3px"></div><div class="b" style="left:1883px;top:480px;width:7px;height:220px;background:#a8aaa8;border-radius:3px"></div><svg class="b" style="left:1160px;top:463px;" width="720" height="387" viewBox="0 0 720 387"><rect x="82" y="43" width="495" height="325" fill="#e5e5e5"/><rect x="82" y="45" width="495" height="1" fill="#ffffff"/><rect x="76" y="45" width="5" height="1.2" fill="#555555"/><text x="70.5" y="50.20" font-family="Liberation Sans" font-size="13.4" fill="#555555" text-anchor="end">4.5</text><rect x="82" y="81" width="495" height="1" fill="#ffffff"/><rect x="76" y="81" width="5" height="1.2" fill="#555555"/><text x="70.5" y="86.20" font-family="Liberation Sans" font-size="13.4" fill="#555555" text-anchor="end">4.0</text><rect x="82" y="117" width="495" height="1" fill="#ffffff"/><rect x="76" y="117" width="5" height="1.2" fill="#555555"/><text x="70.5" y="122.20" font-family="Liberation Sans" font-size="13.4" fill="#555555" text-anchor="end">3.5</text><rect x="82" y="154" width="495" height="1" fill="#ffffff"/><rect x="76" y="154" width="5" height="1.2" fill="#555555"/><text x="70.5" y="159.20" font-family="Liberation Sans" font-size="13.4" fill="#555555" text-anchor="end">3.0</text><rect x="82" y="190" width="495" height="1" fill="#ffffff"/><rect x="76" y="190" width="5" height="1.2" fill="#555555"/><text x="70.5" y="195.20" font-family="Liberation Sans" font-size="13.4" fill="#555555" text-anchor="end">2.5</text><rect x="82" y="226" width="495" height="1" fill="#ffffff"/><rect x="76" y="226" width="5" height="1.2" fill="#555555"/><text x="70.5" y="231.20" font-family="Liberation Sans" font-size="13.4" fill="#555555" text-anchor="end">2.0</text><rect x="82" y="263" width="495" height="1" fill="#ffffff"/><rect x="76" y="263" width="5" height="1.2" fill="#555555"/><text x="70.5" y="268.20" font-family="Liberation Sans" font-size="13.4" fill="#555555" text-anchor="end">1.5</text><rect x="82" y="299" width="495" height="1" fill="#ffffff"/><rect x="76" y="299" width="5" height="1.2" fill="#555555"/><text x="70.5" y="304.20" font-family="Liberation Sans" font-size="13.4" fill="#555555" text-anchor="end">1.0</text><rect x="82" y="335" width="495" height="1" fill="#ffffff"/><rect x="76" y="335" width="5" height="1.2" fill="#555555"/><text x="70.5" y="340.20" font-family="Liberation Sans" font-size="13.4" fill="#555555" text-anchor="end">0.5</text><rect x="104" y="43" width="1" height="325" fill="#ffffff"/><rect x="104" y="369" width="1.3" height="4.8" fill="#444444"/><rect x="109" y="43" width="1" height="325" fill="#ffffff"/><rect x="109" y="369" width="1.3" height="4.8" fill="#444444"/><rect x="115" y="43" width="1" height="325" fill="#ffffff"/><rect x="115" y="369" width="1.3" height="4.8" fill="#444444"/><rect x="121" y="43" width="1" height="325" fill="#ffffff"/><rect x="121" y="369" width="1.3" height="4.8" fill="#444444"/><rect x="127" y="43" width="1" height="325" fill="#ffffff"/><rect x="127" y="369" width="1.3" height="4.8" fill="#444444"/><rect x="133" y="43" width="1" height="325" fill="#ffffff"/><rect x="133" y="369" width="1.3" height="4.8" fill="#444444"/><rect x="138" y="43" width="1" height="325" fill="#ffffff"/><rect x="138" y="369" width="1.3" height="4.8" fill="#444444"/><rect x="144" y="43" width="1" height="325" fill="#ffffff"/><rect x="144" y="369" width="1.3" height="4.8" fill="#444444"/><rect x="150" y="43" width="1" height="325" fill="#ffffff"/><rect x="150" y="369" width="1.3" height="4.8" fill="#444444"/><rect x="156" y="43" width="1" height="325" fill="#ffffff"/><rect x="156" y="369" width="1.3" height="4.8" fill="#444444"/><rect x="161" y="43" width="1" height="325" fill="#ffffff"/><rect x="161" y="369" width="1.3" height="4.8" fill="#444444"/><rect x="167" y="43" width="1" height="325" fill="#ffffff"/><rect x="167" y="369" width="1.3" height="4.8" fill="#444444"/><rect x="173" y="43" width="1" height="325" fill="#ffffff"/><rect x="173" y="369" width="1.3" height="4.8" fill="#444444"/><rect x="179" y="43" width="1" height="325" fill="#ffffff"/><rect x="179" y="369" width="1.3" height="4.8" fill="#444444"/><rect x="185" y="43" width="1" height="325" fill="#ffffff"/><rect x="185" y="369" width="1.3" height="4.8" fill="#444444"/><rect x="190" y="43" width="1" height="325" fill="#ffffff"/><rect x="190" y="369" width="1.3" height="4.8" fill="#444444"/><rect x="196" y="43" width="1" height="325" fill="#ffffff"/><rect x="196" y="369" width="1.3" height="4.8" fill="#444444"/><rect x="202" y="43" width="1" height="325" fill="#ffffff"/><rect x="202" y="369" width="1.3" height="4.8" fill="#444444"/><rect x="208" y="43" width="1" height="325" fill="#ffffff"/><rect x="208" y="369" width="1.3" height="4.8" fill="#444444"/><rect x="213" y="43" width="1" height="325" fill="#ffffff"/><rect x="213" y="369" width="1.3" height="4.8" fill="#444444"/><rect x="219" y="43" width="1" height="325" fill="#ffffff"/><rect x="219" y="369" width="1.3" height="4.8" fill="#444444"/><rect x="225" y="43" width="1" height="325" fill="#ffffff"/><rect x="225" y="369" width="1.3" height="4.8" fill="#444444"/><rect x="231" y="43" width="1" height="325" fill="#ffffff"/><rect x="231" y="369" width="1.3" height="4.8" fill="#444444"/><rect x="236" y="43" width="1" height="325" fill="#ffffff"/><rect x="236" y="369" width="1.3" height="4.8" fill="#444444"/><rect x="242" y="43" width="1" height="325" fill="#ffffff"/><rect x="242" y="369" width="1.3" height="4.8" fill="#444444"/><rect x="248" y="43" width="1" height="325" fill="#ffffff"/><rect x="248" y="369" width="1.3" height="4.8" fill="#444444"/><rect x="254" y="43" width="1" height="325" fill="#ffffff"/><rect x="254" y="369" width="1.3" height="4.8" fill="#444444"/><rect x="260" y="43" width="1" height="325" fill="#ffffff"/><rect x="260" y="369" width="1.3" height="4.8" fill="#444444"/><rect x="265" y="43" width="1" height="325" fill="#ffffff"/><rect x="265" y="369" width="1.3" height="4.8" fill="#444444"/><rect x="271" y="43" width="1" height="325" fill="#ffffff"/><rect x="271" y="369" width="1.3" height="4.8" fill="#444444"/><rect x="277" y="43" width="1" height="325" fill="#ffffff"/><rect x="277" y="369" width="1.3" height="4.8" fill="#444444"/><rect x="283" y="43" width="1" height="325" fill="#ffffff"/><rect x="283" y="369" width="1.3" height="4.8" fill="#444444"/><rect x="288" y="43" width="1" height="325" fill="#ffffff"/><rect x="288" y="369" width="1.3" height="4.8" fill="#444444"/><rect x="294" y="43" width="1" height="325" fill="#ffffff"/><rect x="294" y="369" width="1.3" height="4.8" fill="#444444"/><rect x="300" y="43" width="1" height="325" fill="#ffffff"/><rect x="300" y="369" width="1.3" height="4.8" fill="#444444"/><rect x="306" y="43" width="1" height="325" fill="#ffffff"/><rect x="306" y="369" width="1.3" height="4.8" fill="#444444"/><rect x="312" y="43" width="1" height="325" fill="#ffffff"/><rect x="312" y="369" width="1.3" height="4.8" fill="#444444"/><rect x="317" y="43" width="1" height="325" fill="#ffffff"/><rect x="317" y="369" width="1.3" height="4.8" fill="#444444"/><rect x="323" y="43" width="1" height="325" fill="#ffffff"/><rect x="323" y="369" width="1.3" height="4.8" fill="#444444"/><rect x="329" y="43" width="1" height="325" fill="#ffffff"/><rect x="329" y="369" width="1.3" height="4.8" fill="#444444"/><rect x="335" y="43" width="1" height="325" fill="#ffffff"/><rect x="335" y="369" width="1.3" height="4.8" fill="#444444"/><rect x="340" y="43" width="1" height="325" fill="#ffffff"/><rect x="340" y="369" width="1.3" height="4.8" fill="#444444"/><rect x="346" y="43" width="1" height="325" fill="#ffffff"/><rect x="346" y="369" width="1.3" height="4.8" fill="#444444"/><rect x="352" y="43" width="1" height="325" fill="#ffffff"/><rect x="352" y="369" width="1.3" height="4.8" fill="#444444"/><rect x="358" y="43" width="1" height="325" fill="#ffffff"/><rect x="358" y="369" width="1.3" height="4.8" fill="#444444"/><rect x="363" y="43" width="1" height="325" fill="#ffffff"/><rect x="363" y="369" width="1.3" height="4.8" fill="#444444"/><rect x="369" y="43" width="1" height="325" fill="#ffffff"/><rect x="369" y="369" width="1.3" height="4.8" fill="#444444"/><rect x="375" y="43" width="1" height="325" fill="#ffffff"/><rect x="375" y="369" width="1.3" height="4.8" fill="#444444"/><rect x="381" y="43" width="1" height="325" fill="#ffffff"/><rect x="381" y="369" width="1.3" height="4.8" fill="#444444"/><rect x="387" y="43" width="1" height="325" fill="#ffffff"/><rect x="387" y="369" width="1.3" height="4.8" fill="#444444"/><rect x="392" y="43" width="1" height="325" fill="#ffffff"/><rect x="392" y="369" width="1.3" height="4.8" fill="#444444"/><rect x="398" y="43" width="1" height="325" fill="#ffffff"/><rect x="398" y="369" width="1.3" height="4.8" fill="#444444"/><rect x="404" y="43" width="1" height="325" fill="#ffffff"/><rect x="404" y="369" width="1.3" height="4.8" fill="#444444"/><rect x="410" y="43" width="1" height="325" fill="#ffffff"/><rect x="410" y="369" width="1.3" height="4.8" fill="#444444"/><rect x="415" y="43" width="1" height="325" fill="#ffffff"/><rect x="415" y="369" width="1.3" height="4.8" fill="#444444"/><rect x="421" y="43" width="1" height="325" fill="#ffffff"/><rect x="421" y="369" width="1.3" height="4.8" fill="#444444"/><rect x="427" y="43" width="1" height="325" fill="#ffffff"/><rect x="427" y="369" width="1.3" height="4.8" fill="#444444"/><rect x="433" y="43" width="1" height="325" fill="#ffffff"/><rect x="433" y="369" width="1.3" height="4.8" fill="#444444"/><rect x="439" y="43" width="1" height="325" fill="#ffffff"/><rect x="439" y="369" width="1.3" height="4.8" fill="#444444"/><rect x="444" y="43" width="1" height="325" fill="#ffffff"/><rect x="444" y="369" width="1.3" height="4.8" fill="#444444"/><rect x="450" y="43" width="1" height="325" fill="#ffffff"/><rect x="450" y="369" width="1.3" height="4.8" fill="#444444"/><rect x="456" y="43" width="1" height="325" fill="#ffffff"/><rect x="456" y="369" width="1.3" height="4.8" fill="#444444"/><rect x="462" y="43" width="1" height="325" fill="#ffffff"/><rect x="462" y="369" width="1.3" height="4.8" fill="#444444"/><rect x="467" y="43" width="1" height="325" fill="#ffffff"/><rect x="467" y="369" width="1.3" height="4.8" fill="#444444"/><rect x="473" y="43" width="1" height="325" fill="#ffffff"/><rect x="473" y="369" width="1.3" height="4.8" fill="#444444"/><rect x="479" y="43" width="1" height="325" fill="#ffffff"/><rect x="479" y="369" width="1.3" height="4.8" fill="#444444"/><rect x="485" y="43" width="1" height="325" fill="#ffffff"/><rect x="485" y="369" width="1.3" height="4.8" fill="#444444"/><rect x="491" y="43" width="1" height="325" fill="#ffffff"/><rect x="491" y="369" width="1.3" height="4.8" fill="#444444"/><rect x="496" y="43" width="1" height="325" fill="#ffffff"/><rect x="496" y="369" width="1.3" height="4.8" fill="#444444"/><rect x="502" y="43" width="1" height="325" fill="#ffffff"/><rect x="502" y="369" width="1.3" height="4.8" fill="#444444"/><rect x="508" y="43" width="1" height="325" fill="#ffffff"/><rect x="508" y="369" width="1.3" height="4.8" fill="#444444"/><rect x="514" y="43" width="1" height="325" fill="#ffffff"/><rect x="514" y="369" width="1.3" height="4.8" fill="#444444"/><rect x="519" y="43" width="1" height="325" fill="#ffffff"/><rect x="519" y="369" width="1.3" height="4.8" fill="#444444"/><rect x="525" y="43" width="1" height="325" fill="#ffffff"/><rect x="525" y="369" width="1.3" height="4.8" fill="#444444"/><rect x="531" y="43" width="1" height="325" fill="#ffffff"/><rect x="531" y="369" width="1.3" height="4.8" fill="#444444"/><rect x="537" y="43" width="1" height="325" fill="#ffffff"/><rect x="537" y="369" width="1.3" height="4.8" fill="#444444"/><rect x="542" y="43" width="1" height="325" fill="#ffffff"/><rect x="542" y="369" width="1.3" height="4.8" fill="#444444"/><rect x="548" y="43" width="1" height="325" fill="#ffffff"/><rect x="548" y="369" width="1.3" height="4.8" fill="#444444"/><rect x="554" y="43" width="1" height="325" fill="#ffffff"/><rect x="554" y="369" width="1.3" height="4.8" fill="#444444"/><rect x="97" y="383.20000000000005" width="461" height="1.3" fill="#4a4a4a"/><rect x="556.70" y="380" width="1.4" height="7" fill="#444"/><ellipse cx="544.20" cy="385.20000000000005" rx="7.3" ry="4.6" fill="none" stroke="#444" stroke-width="1.9"/><ellipse cx="543.00" cy="385.6" rx="2.3" ry="3.0" fill="none" stroke="#444" stroke-width="1.6"/><rect x="546.60" y="383" width="1.5" height="5" fill="#444"/><rect x="533.61" y="380" width="1.4" height="7" fill="#444"/><ellipse cx="521.11" cy="385.20000000000005" rx="7.3" ry="4.6" fill="none" stroke="#444" stroke-width="1.9"/><ellipse cx="519.91" cy="385.6" rx="2.3" ry="3.0" fill="none" stroke="#444" stroke-width="1.6"/><rect x="523.51" y="383" width="1.5" height="5" fill="#444"/><rect x="510.52" y="380" width="1.4" height="7" fill="#444"/><ellipse cx="498.02" cy="385.20000000000005" rx="7.3" ry="4.6" fill="none" stroke="#444" stroke-width="1.9"/><ellipse cx="496.82" cy="385.6" rx="2.3" ry="3.0" fill="none" stroke="#444" stroke-width="1.6"/><rect x="500.42" y="383" width="1.5" height="5" fill="#444"/><rect x="487.43" y="380" width="1.4" height="7" fill="#444"/><ellipse cx="474.93" cy="385.20000000000005" rx="7.3" ry="4.6" fill="none" stroke="#444" stroke-width="1.9"/><ellipse cx="473.73" cy="385.6" rx="2.3" ry="3.0" fill="none" stroke="#444" stroke-width="1.6"/><rect x="477.33" y="383" width="1.5" height="5" fill="#444"/><rect x="464.34" y="380" width="1.4" height="7" fill="#444"/><ellipse cx="451.84" cy="385.20000000000005" rx="7.3" ry="4.6" fill="none" stroke="#444" stroke-width="1.9"/><ellipse cx="450.64" cy="385.6" rx="2.3" ry="3.0" fill="none" stroke="#444" stroke-width="1.6"/><rect x="454.24" y="383" width="1.5" height="5" fill="#444"/><rect x="441.25" y="380" width="1.4" height="7" fill="#444"/><ellipse cx="428.75" cy="385.20000000000005" rx="7.3" ry="4.6" fill="none" stroke="#444" stroke-width="1.9"/><ellipse cx="427.55" cy="385.6" rx="2.3" ry="3.0" fill="none" stroke="#444" stroke-width="1.6"/><rect x="431.15" y="383" width="1.5" height="5" fill="#444"/><rect x="418.16" y="380" width="1.4" height="7" fill="#444"/><ellipse cx="405.66" cy="385.20000000000005" rx="7.3" ry="4.6" fill="none" stroke="#444" stroke-width="1.9"/><ellipse cx="404.46" cy="385.6" rx="2.3" ry="3.0" fill="none" stroke="#444" stroke-width="1.6"/><rect x="408.06" y="383" width="1.5" height="5" fill="#444"/><rect x="395.07" y="380" width="1.4" height="7" fill="#444"/><ellipse cx="382.57" cy="385.20000000000005" rx="7.3" ry="4.6" fill="none" stroke="#444" stroke-width="1.9"/><ellipse cx="381.37" cy="385.6" rx="2.3" ry="3.0" fill="none" stroke="#444" stroke-width="1.6"/><rect x="384.97" y="383" width="1.5" height="5" fill="#444"/><rect x="371.98" y="380" width="1.4" height="7" fill="#444"/><ellipse cx="359.48" cy="385.20000000000005" rx="7.3" ry="4.6" fill="none" stroke="#444" stroke-width="1.9"/><ellipse cx="358.28" cy="385.6" rx="2.3" ry="3.0" fill="none" stroke="#444" stroke-width="1.6"/><rect x="361.88" y="383" width="1.5" height="5" fill="#444"/><rect x="348.89" y="380" width="1.4" height="7" fill="#444"/><ellipse cx="336.39" cy="385.20000000000005" rx="7.3" ry="4.6" fill="none" stroke="#444" stroke-width="1.9"/><ellipse cx="335.19" cy="385.6" rx="2.3" ry="3.0" fill="none" stroke="#444" stroke-width="1.6"/><rect x="338.79" y="383" width="1.5" height="5" fill="#444"/><rect x="325.80" y="380" width="1.4" height="7" fill="#444"/><ellipse cx="313.30" cy="385.20000000000005" rx="7.3" ry="4.6" fill="none" stroke="#444" stroke-width="1.9"/><ellipse cx="312.10" cy="385.6" rx="2.3" ry="3.0" fill="none" stroke="#444" stroke-width="1.6"/><rect x="315.70" y="383" width="1.5" height="5" fill="#444"/><rect x="302.71" y="380" width="1.4" height="7" fill="#444"/><ellipse cx="290.21" cy="385.20000000000005" rx="7.3" ry="4.6" fill="none" stroke="#444" stroke-width="1.9"/><ellipse cx="289.01" cy="385.6" rx="2.3" ry="3.0" fill="none" stroke="#444" stroke-width="1.6"/><rect x="292.61" y="383" width="1.5" height="5" fill="#444"/><rect x="279.62" y="380" width="1.4" height="7" fill="#444"/><ellipse cx="267.12" cy="385.20000000000005" rx="7.3" ry="4.6" fill="none" stroke="#444" stroke-width="1.9"/><ellipse cx="265.92" cy="385.6" rx="2.3" ry="3.0" fill="none" stroke="#444" stroke-width="1.6"/><rect x="269.52" y="383" width="1.5" height="5" fill="#444"/><rect x="256.53" y="380" width="1.4" height="7" fill="#444"/><ellipse cx="244.03" cy="385.20000000000005" rx="7.3" ry="4.6" fill="none" stroke="#444" stroke-width="1.9"/><ellipse cx="242.83" cy="385.6" rx="2.3" ry="3.0" fill="none" stroke="#444" stroke-width="1.6"/><rect x="246.43" y="383" width="1.5" height="5" fill="#444"/><rect x="233.44" y="380" width="1.4" height="7" fill="#444"/><ellipse cx="220.94" cy="385.20000000000005" rx="7.3" ry="4.6" fill="none" stroke="#444" stroke-width="1.9"/><ellipse cx="219.74" cy="385.6" rx="2.3" ry="3.0" fill="none" stroke="#444" stroke-width="1.6"/><rect x="223.34" y="383" width="1.5" height="5" fill="#444"/><rect x="210.35" y="380" width="1.4" height="7" fill="#444"/><ellipse cx="197.85" cy="385.20000000000005" rx="7.3" ry="4.6" fill="none" stroke="#444" stroke-width="1.9"/><ellipse cx="196.65" cy="385.6" rx="2.3" ry="3.0" fill="none" stroke="#444" stroke-width="1.6"/><rect x="200.25" y="383" width="1.5" height="5" fill="#444"/><rect x="187.26" y="380" width="1.4" height="7" fill="#444"/><ellipse cx="174.76" cy="385.20000000000005" rx="7.3" ry="4.6" fill="none" stroke="#444" stroke-width="1.9"/><ellipse cx="173.56" cy="385.6" rx="2.3" ry="3.0" fill="none" stroke="#444" stroke-width="1.6"/><rect x="177.16" y="383" width="1.5" height="5" fill="#444"/><rect x="164.17" y="380" width="1.4" height="7" fill="#444"/><ellipse cx="151.67" cy="385.20000000000005" rx="7.3" ry="4.6" fill="none" stroke="#444" stroke-width="1.9"/><ellipse cx="150.47" cy="385.6" rx="2.3" ry="3.0" fill="none" stroke="#444" stroke-width="1.6"/><rect x="154.07" y="383" width="1.5" height="5" fill="#444"/><rect x="141.08" y="380" width="1.4" height="7" fill="#444"/><ellipse cx="128.58" cy="385.20000000000005" rx="7.3" ry="4.6" fill="none" stroke="#444" stroke-width="1.9"/><ellipse cx="127.38" cy="385.6" rx="2.3" ry="3.0" fill="none" stroke="#444" stroke-width="1.6"/><rect x="130.98" y="383" width="1.5" height="5" fill="#444"/><rect x="117.99" y="380" width="1.4" height="7" fill="#444"/><ellipse cx="105.49" cy="385.20000000000005" rx="7.3" ry="4.6" fill="none" stroke="#444" stroke-width="1.9"/><ellipse cx="104.29" cy="385.6" rx="2.3" ry="3.0" fill="none" stroke="#444" stroke-width="1.6"/><rect x="107.89" y="383" width="1.5" height="5" fill="#444"/><line x1="104.20000000000005" y1="56.200000000000045" x2="555.3" y2="56.200000000000045" stroke="#0000ff" stroke-width="3" stroke-dasharray="10.4 4.3"/><line x1="104.20000000000005" y1="142.5" x2="555.3" y2="142.5" stroke="#ff0000" stroke-width="3" stroke-dasharray="10.4 4.3"/><line x1="104.20000000000005" y1="227" x2="555.3" y2="227" stroke="#008000" stroke-width="3" stroke-dasharray="10.4 4.3"/><polyline points="104.30,141.33 110.07,143.51 115.85,134.80 121.62,134.07 127.39,136.25 133.17,132.62 138.94,132.62 144.71,134.80 150.48,153.67 156.26,174.73 162.03,160.93 167.80,152.95 173.58,146.41 179.35,156.58 185.12,160.21 190.90,166.02 196.67,165.29 202.44,168.19 208.22,168.92 213.99,161.66 219.76,164.56 225.53,171.10 231.31,168.19 237.08,164.56 242.85,177.63 248.63,156.58 254.40,141.33 260.17,143.51 265.95,144.24 271.72,152.22 277.49,141.33 283.27,127.54 289.04,123.91 294.81,123.18 300.58,126.81 306.36,140.61 312.13,128.99 317.90,102.13 323.68,128.99 329.45,188.52 335.22,209.58 341.00,246.60 346.77,298.15 352.54,292.34 358.32,291.61 364.09,284.35 369.86,242.97 375.63,270.56 381.41,250.23 387.18,253.14 392.95,257.49 398.73,263.30 404.50,276.37 410.27,279.27 416.05,285.81 421.82,293.79 427.59,300.33 433.37,306.13 439.14,317.75 444.91,321.38 450.68,326.46 456.46,330.09 462.23,332.27 468.00,335.17 473.78,337.35 479.55,341.71 485.32,340.26 491.10,338.80 496.87,340.98 502.64,345.34 508.42,341.71 514.19,340.26 519.96,348.24 525.73,348.24 531.51,353.32 537.28,351.15 543.05,349.69 548.83,351.87 554.60,349.69" fill="none" stroke="#000000" stroke-width="2.1" stroke-linejoin="round"/><text x="107" y="217.29999999999995" font-family="Liberation Sans" font-size="18" fill="#ff0000" textLength="122.5" lengthAdjust="spacingAndGlyphs">MEAN : 1.98 %</text><text x="90.5" y="33.39999999999998" font-family="Liberation Sans" font-size="19.4" fill="#000000" textLength="477" lengthAdjust="spacingAndGlyphs">RMSE CHARGEOFFRATE_QLY_SADJ BEST MODEL</text><text transform="translate(41,229) rotate(-90)" font-family="Liberation Sans" font-size="17" fill="#555555" textLength="48" lengthAdjust="spacingAndGlyphs">RMSE</text><rect x="88.5" y="273.6" width="260.5" height="87.4" rx="3" fill="#e5e5e5" fill-opacity="0.82" stroke="#cccccc" stroke-opacity="0.8" stroke-width="1"/><line x1="93" y1="285" x2="122" y2="285" stroke="#000" stroke-width="2"/><line x1="94.29999999999995" y1="306.4" x2="120" y2="306.4" stroke="#ff0000" stroke-width="2.6" stroke-dasharray="10.2 4.5"/><line x1="94.29999999999995" y1="327.20000000000005" x2="120" y2="327.20000000000005" stroke="#0000ff" stroke-width="2.6" stroke-dasharray="10.2 4.5"/><line x1="94.29999999999995" y1="348.20000000000005" x2="120" y2="348.20000000000005" stroke="#008000" stroke-width="2.6" stroke-dasharray="10.2 4.5"/><text x="132.5" y="290" font-family="Liberation Sans" font-size="14" fill="#111111" textLength="210" lengthAdjust="spacingAndGlyphs">4Q Rolling Window Backtesing</text><text x="132.5" y="310.79999999999995" font-family="Liberation Sans" font-size="14" fill="#111111" textLength="80.5" lengthAdjust="spacingAndGlyphs">Std + Mean</text><text x="132.5" y="331.6" font-family="Liberation Sans" font-size="14" fill="#111111" textLength="67.1" lengthAdjust="spacingAndGlyphs">Threshold</text><text x="133.20000000000005" y="352" font-family="Liberation Sans" font-size="14" fill="#111111" textLength="36.1" lengthAdjust="spacingAndGlyphs">Mean</text></svg>
</body></html>
